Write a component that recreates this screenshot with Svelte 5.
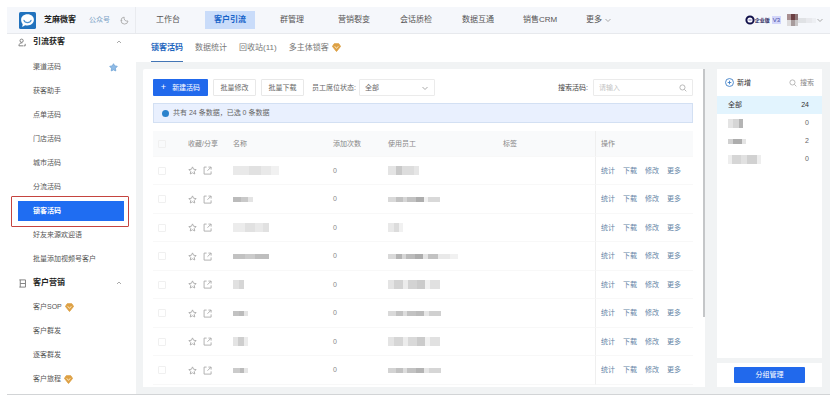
<script lang="ts">
  type Item = { label: string; star?: boolean; gem?: boolean };
  // one mosaic block of a hidden name: width, opacity
  type Block = [number, number];
  type Row = { name: Block[]; staff: Block[]; nameTall?: boolean; staffTall?: boolean };

  const nav = ["工作台", "客户引流", "群管理", "营销裂变", "会话质检", "数据互通", "销售CRM"];
  const activeNav = "客户引流";

  const groups: { title: string; icon: string; items: Item[] }[] = [
    {
      title: "引流获客",
      icon: "user",
      items: [
        { label: "渠道活码", star: true },
        { label: "获客助手" },
        { label: "点单活码" },
        { label: "门店活码" },
        { label: "城市活码" },
        { label: "分流活码" },
        { label: "锁客活码" },
        { label: "好友来源欢迎语" },
        { label: "批量添加视频号客户" },
      ],
    },
    {
      title: "客户营销",
      icon: "book",
      items: [
        { label: "客户SOP", gem: true },
        { label: "客户群发" },
        { label: "逐客群发" },
        { label: "客户旅程", gem: true },
      ],
    },
  ];
  const activeItem = "锁客活码";

  const tabs: Item[] = [
    { label: "锁客活码" },
    { label: "数据统计" },
    { label: "回收站(11)" },
    { label: "多主体锁客", gem: true },
  ];

  const rows: Row[] = [
    { name: [[16, 0.16], [12, 0.22], [10, 0.16], [8, 0.1]], nameTall: true, staff: [[8, 0.2], [6, 0.4], [12, 0.25], [5, 0.18]], staffTall: true },
    { name: [[8, 0.5], [7, 0.4], [5, 0.2]], staff: [[8, 0.28], [7, 0.45], [4, 0.3], [9, 0.45], [8, 0.6], [4, 0.1], [12, 0.28]] },
    { name: [[12, 0.14], [10, 0.22], [8, 0.16], [6, 0.22]], nameTall: true, staff: [[6, 0.16], [5, 0.26], [4, 0.1]], staffTall: true },
    { name: [[12, 0.45], [10, 0.38], [14, 0.48]], staff: [[8, 0.28], [6, 0.55], [4, 0.3], [9, 0.5], [8, 0.6], [5, 0.2], [10, 0.45], [12, 0.16], [8, 0.1]] },
    { name: [[6, 0.22], [5, 0.3]], nameTall: true, staff: [[6, 0.2], [9, 0.32], [5, 0.14], [9, 0.32], [8, 0.38], [5, 0.1], [10, 0.22]], staffTall: true },
    { name: [[6, 0.45], [5, 0.5], [4, 0.2]], staff: [[8, 0.28], [7, 0.45], [4, 0.25], [9, 0.45], [8, 0.5], [5, 0.18], [12, 0.35]] },
    { name: [[5, 0.2], [6, 0.36], [4, 0.14]], nameTall: true, staff: [[6, 0.2], [9, 0.3], [5, 0.14], [9, 0.28], [8, 0.38], [5, 0.1], [10, 0.22]], staffTall: true },
    { name: [[7, 0.38], [4, 0.5], [4, 0.18]], staff: [[8, 0.32], [7, 0.45], [4, 0.25], [9, 0.45], [8, 0.55], [5, 0.18], [12, 0.3]] },
  ];
  const actions = ["统计", "下载", "修改", "更多"];

  const tags: { blocks: Block[]; tall: boolean; count: number }[] = [
    { blocks: [[5, 0.2], [6, 0.3], [4, 0.55]], tall: true, count: 0 },
    { blocks: [[5, 0.35], [9, 0.6], [4, 0.2]], tall: false, count: 2 },
    { blocks: [[4, 0.12], [9, 0.3], [6, 0.22], [10, 0.34], [4, 0.12]], tall: true, count: 0 },
  ];
</script>

{#snippet gem()}
  <svg class="gem" viewBox="0 0 10 10" aria-hidden="true">
    <path d="M2.5.8h5l2 3L5 9.4.5 3.8z" fill="#dda044" stroke="#dda044" stroke-linejoin="round" />
    <path d="M3 3.6 5 6l2-2.4" fill="none" stroke="#fff0cf" />
  </svg>
{/snippet}

{#snippet chevron(up: boolean)}
  <svg class="chevron" viewBox="0 0 8 8" aria-hidden="true">
    <path d={up ? "M2 5l2-2 2 2" : "M1.5 3 4 5.5 6.5 3"} />
  </svg>
{/snippet}

{#snippet lens()}
  <svg class="lens" viewBox="0 0 10 10" aria-hidden="true">
    <circle cx="4.3" cy="4.3" r="3.2" /><path d="m6.7 6.7 2.5 2.5" />
  </svg>
{/snippet}

{#snippet mosaic(blocks: Block[], tall: boolean)}
  <span class="mosaic" class:tall>
    {#each blocks as [width, alpha]}
      <i style="width: {width}px; opacity: {alpha}"></i>
    {/each}
  </span>
{/snippet}

<div class="app">
  <header>
    <div class="brand">
      <svg class="logo" viewBox="0 0 16 16" aria-hidden="true">
        <rect width="16" height="16" rx="1.5" fill="#2172bd" />
        <path d="M8 2.2c3.6 0 6 2.2 6 5.2s-2.5 5.4-6 5.4c-.8 0-1.5-.1-2.2-.3L3 14l.5-2.6C2.5 10.4 2 9 2 7.4c0-3 2.4-5.2 6-5.2z" fill="#fff" />
        <path d="M4.6 7.8c1 2.9 5.8 2.9 6.8 0" fill="none" stroke="#4b91cf" stroke-linecap="round" />
      </svg>
      <strong>芝麻微客</strong>
      <a class="mp" href="#mp">公众号</a>
      <svg class="moon" viewBox="0 0 10 10" aria-hidden="true">
        <path d="M4.6 1.2A3.9 3.9 0 1 0 8.9 5.6M4.6 1.2c-.6 2.8 1.2 5 4.3 4.4M1 5h1.5" />
      </svg>
    </div>
    <nav class="top-nav">
      {#each nav as label}
        <a href="#{label}" class:active={label === activeNav}>{label}</a>
      {/each}
      <a class="more" href="#more">更多{@render chevron(false)}</a>
    </nav>
    <button class="account" aria-label="账号">
      <svg class="ring" viewBox="0 0 10 10" aria-hidden="true">
        <circle cx="5" cy="5" r="3.6" fill="#fff" stroke="#10104a" stroke-width="2" />
        <path d="M3.5 5h3" stroke="#7773ba" />
      </svg>
      <b>企业版</b><span class="badge">V3</span>
      <span class="avatar"><i></i><i></i><i></i><i></i><i></i><i></i></span>
      {@render mosaic([[8, 0.16], [6, 0.1], [4, 0.06]], false)}
      {@render chevron(false)}
    </button>
  </header>

  <aside>
    {#each groups as group}
      <button class="group">
        <svg class="group-icon" viewBox="0 0 10 10" aria-hidden="true">
          {#if group.icon === "user"}
            <circle cx="4" cy="3" r="1.8" />
            <path d="M4.8 5.4C2.5 5 1.2 6.5 1 8.7h5M8 6.5v2.2H6.5" />
          {:else}
            <path d="M1.5 1h6.8v8H1.5M2.5 1v8M2.5 5h5.5" />
          {/if}
        </svg>
        <span>{group.title}</span>
        {@render chevron(true)}
      </button>
      {#each group.items as item}
        <div class="item-wrap" class:marked={item.label === activeItem}>
          <a class="item" href="#{item.label}">
            {item.label}
            {#if item.gem}{@render gem()}{/if}
            {#if item.star}
              <svg class="pin" viewBox="0 0 10 10" aria-hidden="true">
                <path d="m5 .8 1.3 2.4 2.9.5-2 2.1.3 3L5 7.6 2.5 8.8l.3-3-2-2.1 2.9-.5z" />
              </svg>
            {/if}
          </a>
        </div>
      {/each}
    {/each}
  </aside>

  <main>
    <nav class="tabs">
      {#each tabs as tab, i}
        <a href="#tab{i}" class:active={i === 0}>{tab.label}{#if tab.gem}{@render gem()}{/if}</a>
      {/each}
    </nav>

    <div class="body">
      <section class="card">
        <div class="toolbar">
          <button class="primary"><span>+</span>新建活码</button>
          <button class="plain">批量修改</button>
          <button class="plain">批量下载</button>
          <label for="seat">员工席位状态:</label>
          <div class="select">
            <select id="seat"><option>全部</option></select>
            {@render chevron(false)}
          </div>
          <label class="search-label" for="search">搜索活码:</label>
          <div class="search">
            <input id="search" type="text" placeholder="请输入" />
            {@render lens()}
          </div>
        </div>

        <div class="notice">
          <span class="dot"></span>共有 24 条数据，已选 0 条数据
        </div>

        <table>
          <colgroup>
            <col class="c-check" /><col class="c-fav" /><col class="c-name" /><col class="c-count" />
            <col class="c-staff" /><col /><col class="c-actions" />
          </colgroup>
          <thead>
            <tr>
              <th><input type="checkbox" aria-label="全选" /></th>
              <th>收藏/分享</th>
              <th>名称</th>
              <th>添加次数</th>
              <th>使用员工</th>
              <th>标签</th>
              <th class="ops">操作</th>
            </tr>
          </thead>
          <tbody>
            {#each rows as row, i}
              <tr>
                <td><input type="checkbox" aria-label="选择第{i + 1}行" /></td>
                <td>
                  <div class="marks">
                    <button aria-label="收藏">
                      <svg viewBox="0 0 10 10"><path d="m5 1 1.2 2.6 2.8.4-2 2 .5 2.9L5 7.5 2.5 8.9 3 6 1 4l2.8-.4z" /></svg>
                    </button>
                    <button aria-label="分享">
                      <svg viewBox="0 0 10 10"><path d="M4 1.2H1.2V9H9V6M6 1.2h3V4M9 1.2l-4 4" /></svg>
                    </button>
                  </div>
                </td>
                <td>{@render mosaic(row.name, !!row.nameTall)}</td>
                <td>0</td>
                <td>{@render mosaic(row.staff, !!row.staffTall)}</td>
                <td></td>
                <td class="ops">
                  <div class="links">
                    {#each actions as action}<a href="#{action}">{action}</a>{/each}
                  </div>
                </td>
              </tr>
            {/each}
          </tbody>
        </table>
      </section>

      <div class="scroll"><i></i></div>

      <section class="side">
        <div class="side-main">
          <div class="side-tools">
            <button class="add">
              <svg viewBox="0 0 10 10" aria-hidden="true"><circle cx="5" cy="5" r="4.4" /><path d="M5 3v4M3 5h4" /></svg>新增
            </button>
            <button class="find">{@render lens()}搜索</button>
          </div>
          <ul>
            <li class="active"><span>全部</span><span>24</span></li>
            {#each tags as tag}
              <li>{@render mosaic(tag.blocks, tag.tall)}<span>{tag.count}</span></li>
            {/each}
          </ul>
        </div>
        <div class="side-foot"><button class="primary">分组管理</button></div>
      </section>
    </div>
  </main>
</div>

<style>
  :global(body) {
    margin: 0;
    background: #fff;
  }
  .app {
    display: grid;
    grid-template-columns: 129px 1fr;
    grid-template-rows: 27px auto;
    margin: 7px 10px 16px 7px;
    border-bottom: 1px solid #d2d4d6;
    color: #666;
    font: 7px/12px "Liberation Sans", "Noto Sans CJK SC", sans-serif;
  }
  button, input, select {
    box-sizing: border-box;
    margin: 0;
    padding: 0;
    border: 0;
    background: none;
    color: inherit;
    font: inherit;
  }
  a {
    color: inherit;
    text-decoration: none;
  }
  svg {
    flex: none;
    fill: none;
    stroke: currentColor;
  }
  .gem {
    width: 9px;
    height: 9px;
    margin-left: 3px;
    stroke: none;
  }
  .chevron {
    width: 8px;
    height: 8px;
    color: #aaa;
  }
  .lens {
    width: 8px;
    height: 8px;
    color: #aaa;
  }

  /* header */
  header {
    grid-column: 1 / -1;
    display: flex;
    align-items: center;
    background: #f5f7fb;
    border-bottom: 1px solid #e7e9ed;
  }
  .brand {
    box-sizing: border-box;
    display: flex;
    align-items: center;
    width: 129px;
    height: 100%;
    padding-left: 12px;
    border-right: 1px solid #e9ebef;
  }
  .logo {
    width: 17px;
    height: 17px;
    stroke: none;
  }
  .brand strong {
    margin-left: 8px;
    color: #222;
    font-size: 8px;
  }
  .mp {
    margin-left: 13px;
    color: #7ba2c6;
  }
  .moon {
    width: 9px;
    height: 9px;
    margin-left: 10px;
    color: #aaa;
  }
  .top-nav {
    display: flex;
    align-items: center;
    gap: 12px;
    padding-left: 7px;
    font-size: 8px;
    color: #555;
  }
  .top-nav a {
    display: flex;
    align-items: center;
    justify-content: center;
    width: 50px;
    height: 18px;
    white-space: nowrap;
  }
  .top-nav .active {
    background: #c9dcfa;
    color: #1763c9;
    font-weight: bold;
  }
  .top-nav .more {
    gap: 2px;
    width: 44px;
  }
  .account {
    display: flex;
    align-items: center;
    margin-left: auto;
    padding-right: 6px;
  }
  .ring {
    width: 10px;
    height: 10px;
  }
  .account b {
    color: #29295f;
    font-size: 5px;
  }
  .badge {
    margin: 0 6px 0 2px;
    padding: 0 1px;
    background: #d2d5fa;
    color: #4448a0;
    font-size: 6px;
    line-height: 8px;
  }
  .avatar {
    display: grid;
    grid-template-columns: 4px 4px 3px;
    grid-auto-rows: 6px;
  }
  .avatar i:nth-child(1) { background: #a98f90; }
  .avatar i:nth-child(2) { background: #6b3f43; }
  .avatar i:nth-child(3) { background: #8f7577; }
  .avatar i:nth-child(4) { background: #dedcdd; }
  .avatar i:nth-child(5) { background: #a79b9c; }
  .avatar i:nth-child(6) { background: #c9c6c7; }

  /* sidebar */
  aside {
    display: flex;
    flex-direction: column;
    padding-bottom: 3px;
    color: #555;
  }
  .group {
    display: flex;
    align-items: center;
    height: 24px;
    padding: 0 13px 0 11px;
    color: #222;
    font-size: 8px;
    font-weight: bold;
  }
  .group:first-child {
    height: 21px;
    padding-bottom: 5px;
  }
  .group-icon {
    width: 9px;
    height: 9px;
    margin-right: 6px;
    color: #777;
  }
  .group .chevron {
    margin-left: auto;
  }
  .item-wrap {
    box-sizing: border-box;
    height: 24px;
    padding: 2px 12px 2px 11px;
  }
  .item {
    display: flex;
    align-items: center;
    height: 20px;
    padding: 0 6px 0 15px;
    white-space: nowrap;
  }
  .pin {
    width: 9px;
    height: 9px;
    margin-left: auto;
    fill: #8fbbe6;
    stroke: #75a7d8;
  }
  .marked .item {
    background: #1f6df2;
    color: #fff;
    font-weight: bold;
  }
  /* red callout around the current entry, reaching over its neighbours */
  .marked {
    position: relative;
  }
  .marked::after {
    content: "";
    position: absolute;
    inset: -3px 7px -4px 4px;
    border: 1px solid #c5443f;
    border-radius: 1px;
    pointer-events: none;
  }

  /* content */
  main {
    display: flex;
    flex-direction: column;
    min-width: 0;
    background: #f1f3f4;
  }
  .tabs {
    display: flex;
    gap: 12px;
    height: 28px;
    padding-left: 15px;
    background: #fff;
    color: #777;
    font-size: 8px;
  }
  .tabs a {
    box-sizing: border-box;
    display: flex;
    align-items: center;
    border-bottom: 1px solid transparent;
    white-space: nowrap;
  }
  .tabs .active {
    border-color: #4375b5;
    color: #1d65bd;
    font-weight: bold;
  }
  .body {
    flex: 1;
    display: flex;
    padding: 7px 8px 7px 7px;
  }
  .card {
    flex: 1;
    min-width: 0;
    padding: 10px 10px 0;
    background: #fff;
    border-radius: 2px 0 0 0;
  }
  .toolbar {
    display: flex;
    align-items: center;
    height: 17px;
  }
  .toolbar button {
    height: 100%;
    margin-right: 5px;
    white-space: nowrap;
  }
  .primary {
    width: 55px;
    background: #2169ec;
    border-radius: 1px;
    color: #fff;
  }
  .primary span {
    margin-right: 6px;
    font-size: 9px;
  }
  .plain {
    width: 43px;
    border: 1px solid #e8e8e8;
    border-radius: 1px;
  }
  .toolbar label {
    margin: 0 3px;
    white-space: nowrap;
  }
  .select, .search {
    box-sizing: border-box;
    display: flex;
    align-items: center;
    height: 100%;
    padding: 0 5px;
    border: 1px solid #ebebeb;
    border-radius: 1px;
  }
  .select {
    width: 76px;
  }
  .select select {
    flex: 1;
    appearance: none;
  }
  .toolbar .search-label {
    margin: 0 5px 0 auto;
    color: #444;
  }
  .search {
    width: 100px;
  }
  .search input {
    flex: 1;
    min-width: 0;
    outline: none;
  }
  .search input::placeholder {
    color: #c4c4c4;
  }
  .notice {
    display: flex;
    align-items: center;
    height: 18px;
    margin: 7px 0 8px;
    border: 1px solid #d3e0f3;
    padding-left: 8px;
    background: #e9f0fe;
  }
  .dot {
    width: 7px;
    height: 7px;
    margin-right: 4px;
    border-radius: 50%;
    background: #2b82cc;
  }

  table {
    width: 100%;
    table-layout: fixed;
    border-collapse: separate;
    border-spacing: 0;
  }
  .c-check { width: 32px; }
  .c-fav { width: 45px; }
  .c-name { width: 100px; }
  .c-count { width: 55px; }
  .c-staff { width: 115px; }
  .c-actions { width: 98px; }
  th, td {
    box-sizing: border-box;
    padding: 0 0 0 3px;
    border-bottom: 1px solid #f8f8f8;
    text-align: left;
    vertical-align: middle;
    white-space: nowrap;
  }
  th {
    height: 26px;
    background: #f9fafb;
    color: #888;
    font-weight: normal;
  }
  td {
    height: 28px;
    color: #888;
  }
  tr:nth-child(even) td {
    height: 29px;
  }
  .ops {
    padding-left: 5px;
    border-left: 1px solid #efefef;
  }
  input[type="checkbox"] {
    display: block;
    width: 8px;
    height: 8px;
    margin-left: 2px;
    border: 1px solid #f0f0f0;
    border-radius: 1px;
    appearance: none;
  }
  .marks, .links {
    display: flex;
    gap: 6px;
  }
  .marks button {
    display: flex;
    color: #aaa;
  }
  .marks svg {
    width: 9px;
    height: 9px;
  }
  .links {
    gap: 8px;
    color: #6485a6;
  }
  .mosaic {
    display: flex;
    height: 5px;
  }
  .mosaic.tall {
    height: 9px;
  }
  .mosaic i {
    background: #777;
  }

  .scroll {
    width: 2px;
    background: #fff;
  }
  .scroll i {
    display: block;
    height: 78%;
    background: #c4c6c8;
  }

  /* tag groups */
  .side {
    display: flex;
    flex-direction: column;
    gap: 5px;
    width: 105px;
    margin-left: 12px;
  }
  .side-main {
    flex: 1;
    background: #fff;
  }
  .side-tools {
    display: flex;
    justify-content: space-between;
    height: 27px;
    padding: 0 8px;
  }
  .side-tools button {
    display: flex;
    align-items: center;
    gap: 3px;
  }
  .add {
    color: #333;
  }
  .add svg {
    width: 9px;
    height: 9px;
    color: #3f7fc6;
  }
  .find {
    color: #888;
  }
  ul {
    margin: 0;
    padding: 0;
    list-style: none;
  }
  li {
    display: flex;
    align-items: center;
    justify-content: space-between;
    height: 18px;
    padding: 0 13px 0 11px;
  }
  li.active {
    background: #e2f4fe;
    color: #333;
  }
  .side-foot {
    padding: 4px 17px;
    background: #fff;
  }
  .side-foot .primary {
    display: block;
    width: 100%;
    height: 16px;
  }
</style>
